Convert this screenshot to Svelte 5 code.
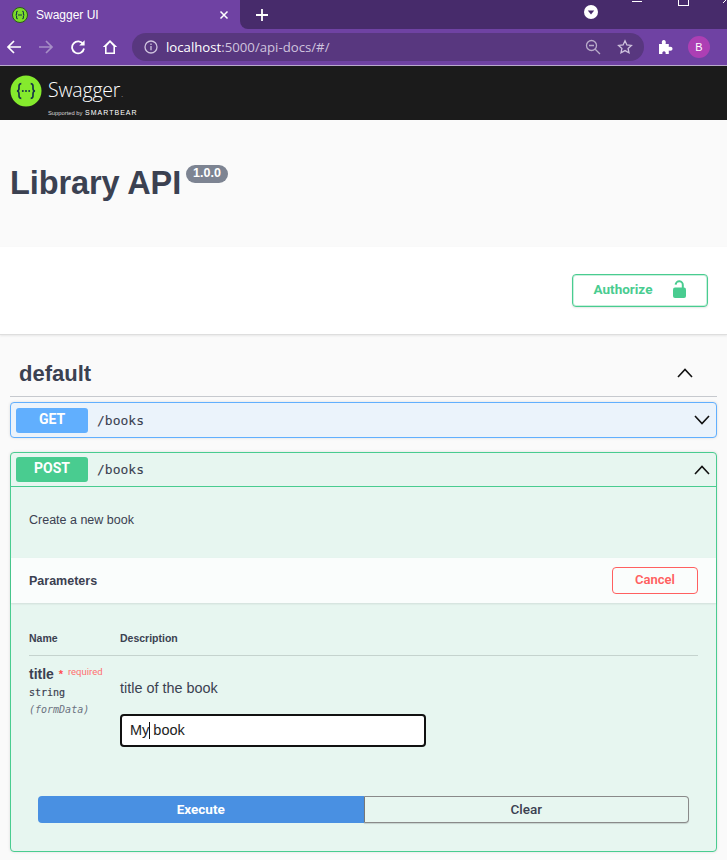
<script>
  let title = 'My book';
</script>

<div class="page">
  <div class="tabstrip">
    <div class="tab">
      <svg class="favicon" viewBox="0 0 16 16" width="16" height="16">
        <circle cx="8" cy="8" r="7.5" fill="#7ddc2a" stroke="#2b5a1a" stroke-width="1" />
        <path d="M5.8 4.200c-1.600 0-1.200 1.600-1.200 2.600 0 .7-.5 1.200-1 1.200.5 0 1 .5 1 1.200 0 1-.4 2.600 1.200 2.600M10.200 4.200c1.600 0 1.200 1.600 1.200 2.600 0 .7.5 1.200 1 1.200-.5 0-1 .5-1 1.200 0 1 .4 2.600-1.200 2.600M6 8h4" fill="none" stroke="#173647" stroke-width="1.100" />
      </svg>
      <span class="tab-title">Swagger UI</span>
      <svg class="tab-close" viewBox="0 0 10 10" width="10" height="10">
        <path d="M1.500 1.500l7 7M8.500 1.500l-7 7" stroke="#fff" stroke-width="1.500" />
      </svg>
    </div>
    <div class="strip-rest">
      <svg class="newtab" viewBox="0 0 14 14" width="14" height="14">
        <path d="M7 1v12M1 7h12" stroke="#fff" stroke-width="1.800" />
      </svg>
      <div class="strip-right">
        <span class="tabsearch">
          <svg viewBox="0 0 14 14" width="14" height="14">
            <circle cx="7" cy="7" r="7" fill="#fff" />
            <path d="M3.800 5.600h6.400L7 9.600z" fill="#46296a" />
          </svg>
        </span>
        <div class="winbtns">
          <span class="win-min"></span>
          <span class="win-max"></span>
          <svg class="win-close" viewBox="0 0 8 8" width="8" height="8">
            <path d="M0 3L5 -2M8 3L3 -2" stroke="#fff" stroke-width="1" />
          </svg>
        </div>
      </div>
    </div>
  </div>

  <div class="toolbar">
    <svg class="nav" viewBox="0 0 16 16" width="16" height="16">
      <path d="M15 8H2M8 2L2 8l6 6" fill="none" stroke="#fff" stroke-width="1.700" />
    </svg>
    <svg class="nav" viewBox="0 0 16 16" width="16" height="16">
      <path d="M1 8h13M8 2l6 6-6 6" fill="none" stroke="#a78fc6" stroke-width="1.700" />
    </svg>
    <svg class="nav" viewBox="0 0 16 16" width="16" height="16">
      <path d="M13.200 5.200A6 6 0 1 0 14 9.500" fill="none" stroke="#fff" stroke-width="1.800" />
      <path d="M14.600 1.200v5.400H9.200z" fill="#fff" />
    </svg>
    <svg class="nav" viewBox="0 0 16 16" width="16" height="16">
      <path d="M8 1L.8 8H3v7h10V8h2.200zM4.600 13.500V7.200L8 3.400l3.400 3.800v6.300z" fill="#fff" fill-rule="evenodd" />
    </svg>
    <div class="omnibox">
      <svg viewBox="0 0 14 14" width="14" height="14">
        <circle cx="7" cy="7" r="6" fill="none" stroke="#cfc3de" stroke-width="1.300" />
        <path d="M7 6v4.200M7 3.600v1.300" stroke="#cfc3de" stroke-width="1.300" />
      </svg>
      <span class="url"><b>localhost</b>:5000/api-docs/#/</span>
      <svg class="zoom-out" viewBox="0 0 16 16" width="16" height="16">
        <circle cx="6.500" cy="6.500" r="5" fill="none" stroke="#b9acca" stroke-width="1.300" />
        <path d="M10.200 10.200L15 15M4 6.500h5" stroke="#b9acca" stroke-width="1.300" />
      </svg>
      <svg class="star" viewBox="0 0 16 16" width="16" height="16">
        <path d="M8 1.800l1.900 4.100 4.500.5-3.300 3 .9 4.400L8 11.600l-4 2.200.9-4.400-3.300-3 4.500-.5z" fill="none" stroke="#cfc3de" stroke-width="1.300" />
      </svg>
    </div>
    <svg class="puzzle" viewBox="0 0 16 16" width="16" height="16">
      <path d="M1 5h3c-.7-2.800.3-4 1.800-4s2.500 1.200 1.800 4h3.200v3c2.700-.6 3.700.4 3.700 1.800s-1 2.500-3.700 1.800V15H7.600c.4-2-.5-2.800-1.600-2.800s-2 .8-1.600 2.800H1z" fill="#fff" />
    </svg>
    <span class="avatar">B</span>
  </div>
  <div class="toolbar-line"></div>

  <header class="topbar">
    <svg class="logo" viewBox="0 0 32 32" width="32" height="32">
      <circle cx="16" cy="16" r="15.500" fill="#85ea2d" />
      <path d="M11.300 8.700c-2.700 0-2.300 2.400-2.300 4.500 0 1.600-.9 2.700-2 2.800 1.100.1 2 1.200 2 2.800 0 2.100-.4 4.500 2.300 4.500M20.700 8.700c2.700 0 2.300 2.400 2.300 4.500 0 1.600.9 2.700 2 2.800-1.100.1-2 1.200-2 2.800 0 2.100.4 4.500-2.300 4.500" fill="none" stroke="#173647" stroke-width="1.700" />
      <circle cx="12.800" cy="16" r="1" fill="#173647" />
      <circle cx="16" cy="16" r="1" fill="#173647" />
      <circle cx="19.200" cy="16" r="1" fill="#173647" />
    </svg>
    <div class="brand">
      <span class="brand-name">Swagger<i>.</i></span>
      <span class="brand-sub">Supported by <b>SMARTBEAR</b></span>
    </div>
  </header>

  <section class="info">
    <h1>Library API</h1>
    <span class="version">1.0.0</span>
  </section>

  <section class="schemes">
    <button class="authorize">
      <span>Authorize</span>
      <svg viewBox="0 0 20 20" width="20" height="20">
        <path d="M13.800 9V6.200a3.600 3.600 0 0 0-7.200-.6" fill="none" stroke="#49cc90" stroke-width="2" />
        <rect x="4" y="8.500" width="13" height="10.500" rx="2" fill="#49cc90" />
      </svg>
    </button>
  </section>

  <main class="content">
    <div class="tag">
      <h3>default</h3>
      <svg class="chevron" viewBox="0 0 20 20" width="20" height="20">
        <path d="M3 14l7-7.500 7 7.500" fill="none" stroke="#111" stroke-width="1.600" />
      </svg>
    </div>

    <div class="opblock get">
      <div class="summary">
        <span class="method">GET</span>
        <span class="path">/books</span>
        <svg class="chevron" viewBox="0 0 20 20" width="20" height="20">
          <path d="M3 6l7 7.500 7-7.500" fill="none" stroke="#111" stroke-width="1.600" />
        </svg>
      </div>
    </div>

    <div class="opblock post">
      <div class="summary open">
        <span class="method">POST</span>
        <span class="path">/books</span>
        <svg class="chevron" viewBox="0 0 20 20" width="20" height="20">
          <path d="M3 14l7-7.500 7 7.500" fill="none" stroke="#111" stroke-width="1.600" />
        </svg>
      </div>
      <p class="description">Create a new book</p>
      <div class="section-head">
        <h4>Parameters</h4>
        <button class="cancel">Cancel</button>
      </div>
      <div class="params">
        <div class="param-head">
          <span class="col-name">Name</span>
          <span>Description</span>
        </div>
        <div class="param-row">
          <div class="col-name">
            <div class="param-name">title <em>*</em> <small>required</small></div>
            <div class="param-type">string</div>
            <div class="param-in">(formData)</div>
          </div>
          <div class="param-desc">
            <p>title of the book</p>
            <div class="input-wrap">
              <input bind:value={title} />
              <span class="caret"></span>
            </div>
          </div>
        </div>
      </div>
      <div class="actions">
        <button class="execute">Execute</button>
        <button class="clear">Clear</button>
      </div>
    </div>
  </main>
</div>

<style>
  :global(body) {
    margin: 0;
    background: #fafafa;
  }

  .page {
    width: 727px;
    height: 860px;
    overflow: hidden;
    font-family: "Liberation Sans", Arial, sans-serif;
    color: #3b4151;
  }

  .tabstrip {
    display: flex;
    height: 29px;
    background: #6f42a3;
  }

  .tab {
    width: 240px;
    display: flex;
    align-items: center;
    padding: 0 12px;
    box-sizing: border-box;
    gap: 8px;
  }

  .favicon {
    flex: none;
  }

  .tab-title {
    flex: 1;
    color: #fff;
    font-size: 12px;
  }

  .tab-close {
    margin-right: -1px;
  }

  .strip-rest {
    flex: 1;
    display: flex;
    align-items: center;
    background: #472b6b;
    border-bottom-left-radius: 8px;
    padding-left: 15px;
  }

  .strip-right {
    margin-left: auto;
    display: flex;
    align-items: flex-start;
    height: 100%;
  }

  .tabsearch {
    display: block;
    margin-top: 5px;
    margin-right: 34px;
    height: 14px;
  }

  .winbtns {
    display: flex;
    align-items: flex-start;
    gap: 36px;
    margin-right: 0;
  }

  .win-min {
    display: block;
    width: 10px;
    height: 1px;
    background: #fff;
    margin-top: 1px;
  }

  .win-max {
    display: block;
    width: 9px;
    height: 5px;
    border: 1px solid #fff;
    border-top: none;
    margin-left: 0;
  }

  .win-close {
    display: block;
    margin-right: -4px;
    margin-left: -2px;
  }

  .toolbar {
    display: flex;
    align-items: center;
    height: 36px;
    background: #6f42a3;
    padding-left: 6px;
    box-sizing: border-box;
  }

  .nav {
    flex: none;
    margin-right: 16px;
  }

  .omnibox {
    display: flex;
    align-items: center;
    width: 512px;
    height: 28px;
    margin-left: -2px;
    border-radius: 14px;
    background: #58377f;
    padding: 0 10px 0 12px;
    box-sizing: border-box;
  }

  .url {
    flex: 1;
    margin-left: 8px;
    font-size: 13.200px;
    font-family: "Open Sans", sans-serif;
    color: #cfc3de;
  }

  .url b {
    font-weight: 400;
    color: #fff;
  }

  .zoom-out {
    margin-right: 16px;
  }

  .star {
    margin-right: 1px;
  }

  .puzzle {
    margin-left: 14px;
  }

  .avatar {
    width: 22px;
    height: 22px;
    margin-left: 14px;
    border-radius: 50%;
    background: #ad3fb4;
    color: #fff;
    font-size: 11px;
    display: flex;
    align-items: center;
    justify-content: center;
  }

  .toolbar-line {
    height: 1px;
    background: #b9a9cc;
  }

  .topbar {
    height: 54px;
    background: #1b1b1b;
    display: flex;
    align-items: flex-start;
    padding-left: 10px;
    gap: 6px;
  }

  .logo {
    flex: none;
    margin-top: 9px;
  }

  .brand {
    display: flex;
    flex-direction: column;
    color: #fff;
    margin-top: 13px;
  }

  .brand-name {
    font-family: "Open Sans", sans-serif;
    font-size: 19.500px;
    font-weight: 300;
    line-height: 22px;
    letter-spacing: -0.200px;
  }

  .brand-name i {
    font-size: 7px;
    font-style: normal;
    margin-left: 1px;
  }

  .brand-sub {
    font-size: 5.800px;
    line-height: 9px;
    margin-top: 2px;
    color: #d8d8d8;
    white-space: nowrap;
  }

  .brand-sub b {
    font-size: 7px;
    letter-spacing: 1px;
    margin-left: 1px;
    color: #fff;
    font-weight: 400;
  }

  .info {
    height: 127px;
    box-sizing: border-box;
    background: #fafafa;
    display: flex;
    align-items: flex-start;
    padding: 44px 0 0 10px;
    gap: 5px;
  }

  h1 {
    margin: 0;
    font-size: 32.500px;
    line-height: 38px;
    font-weight: 700;
    color: #3b4151;
    letter-spacing: -0.100px;
  }

  .version {
    margin-top: 1px;
    height: 18px;
    padding: 0 7px;
    border-radius: 9px;
    background: #7d8492;
    color: #fff;
    font-size: 12.500px;
    font-weight: 700;
    line-height: 17px;
  }

  .schemes {
    height: 88px;
    box-sizing: border-box;
    background: #fff;
    border-bottom: 1px solid #dedede;
    box-shadow: 0 1px 2px rgba(0, 0, 0, 0.08);
    display: flex;
    justify-content: flex-end;
    align-items: flex-start;
    padding: 27px 19px 0 0;
  }

  button {
    font-family: "Liberation Sans", Arial, sans-serif;
    cursor: pointer;
  }

  .authorize {
    width: 136px;
    height: 33px;
    box-sizing: border-box;
    display: flex;
    align-items: center;
    justify-content: center;
    gap: 17px;
    padding: 0 0 3px 3px;
    background: #fff;
    border: 1px solid #49cc90;
    border-radius: 4px;
    color: #49cc90;
    font-family: Roboto, sans-serif;
    font-size: 13.500px;
    font-weight: 700;
    box-shadow: inset 0 0 0 1px rgba(73, 204, 144, 0.3), 0 1px 2px rgba(0, 0, 0, 0.1);
  }

  .content {
    padding: 0 10px;
  }

  .tag {
    height: 62px;
    box-sizing: border-box;
    margin-bottom: 5px;
    padding: 15px 22px 0 9px;
    border-bottom: 1px solid #c6c9ce;
    display: flex;
    align-items: center;
    justify-content: space-between;
  }

  h3 {
    margin: 2px 0 0;
    font-size: 22px;
    font-weight: 700;
    color: #3b4151;
  }

  .opblock {
    border-radius: 4px;
    border: 1px solid;
    box-shadow: 0 0 3px rgba(0, 0, 0, 0.12);
  }

  .get {
    height: 36px;
    box-sizing: border-box;
    margin-bottom: 14px;
    background: #ebf3fb;
    border-color: #61affe;
  }

  .post {
    height: 400px;
    box-sizing: border-box;
    background: #e7f6f0;
    border-color: #49cc90;
  }

  .summary {
    display: flex;
    align-items: center;
    height: 34px;
    padding: 0 4px 0 5px;
    box-sizing: border-box;
  }

  .summary.open {
    height: 34px;
    border-bottom: 1px solid #49cc90;
  }

  .method {
    width: 72px;
    height: 25px;
    border-radius: 3px;
    color: #fff;
    font-family: Roboto, sans-serif;
    font-size: 14px;
    font-weight: 700;
    line-height: 23px;
    text-align: center;
  }

  .get .method {
    background: #61affe;
  }

  .post .method {
    background: #49cc90;
  }

  .path {
    flex: 1;
    padding-left: 9px;
    font-family: "DejaVu Sans Mono", monospace;
    font-size: 13px;
    color: #3b4151;
    -webkit-text-stroke: 0.100px #3b4151;
  }

  .description {
    margin: 0;
    height: 71px;
    box-sizing: border-box;
    padding: 25px 18px 0;
    font-size: 12.500px;
    line-height: 16px;
    color: #3b4151;
  }

  .section-head {
    height: 45px;
    box-sizing: border-box;
    background: rgba(255, 255, 255, 0.8);
    box-shadow: 0 1px 2px rgba(0, 0, 0, 0.1);
    display: flex;
    align-items: center;
    justify-content: space-between;
    padding: 0 18px;
  }

  h4 {
    margin: 0;
    font-size: 12.500px;
    font-weight: 700;
    color: #3b4151;
  }

  .cancel {
    width: 86px;
    height: 27px;
    background: transparent;
    border: 1px solid #ff6060;
    border-radius: 4px;
    color: #ff6060;
    font-family: Roboto, sans-serif;
    font-size: 13px;
    font-weight: 600;
    padding: 0 0 2px;
  }

  .params {
    padding: 28px 18px 0;
  }

  .param-head {
    display: flex;
    height: 24px;
    border-bottom: 1px solid #c5d3ce;
    font-size: 10.500px;
    font-weight: 700;
    line-height: 14px;
    align-items: flex-start;
  }

  .col-name {
    width: 91px;
    flex: none;
  }

  .param-row {
    display: flex;
    padding-top: 8px;
  }

  .param-name {
    font-size: 14px;
    font-weight: 700;
    line-height: 16px;
    white-space: nowrap;
    color: #3b4151;
  }

  .param-name em {
    color: #ff4f4f;
    font-style: normal;
    font-size: 11px;
    vertical-align: 1px;
    margin-left: 1px;
  }

  .param-name small {
    color: #ff6f6f;
    font-family: Roboto, sans-serif;
    font-size: 9.500px;
    font-weight: 400;
    vertical-align: 4px;
    margin-left: 1px;
  }

  .param-type {
    font-family: "DejaVu Sans Mono", monospace;
    font-size: 10px;
    line-height: 14px;
    margin-top: 4px;
    -webkit-text-stroke: 0.200px #3b4151;
  }

  .param-in {
    font-family: "DejaVu Sans Mono", monospace;
    font-size: 10px;
    font-style: italic;
    line-height: 14px;
    margin-top: 3px;
    color: #6b7280;
  }

  .param-desc p {
    margin: 15px 0 0;
    font-size: 14.400px;
    line-height: 18px;
    color: #3b4151;
  }

  .input-wrap {
    position: relative;
    margin-top: 17px;
    width: 306px;
  }

  input {
    display: block;
    width: 100%;
    height: 33px;
    box-sizing: border-box;
    padding: 0 8px 1px;
    background: #fff;
    border: 2px solid #111;
    border-radius: 4px;
    outline: none;
    font-family: "Liberation Sans", Arial, sans-serif;
    font-size: 14.500px;
    color: #222;
  }

  .caret {
    position: absolute;
    left: 29px;
    top: 8px;
    width: 1px;
    height: 17px;
    background: #111;
  }

  .actions {
    display: flex;
    margin: 49px 27px 0;
  }

  .actions button {
    width: 50%;
    height: 27px;
    font-family: Roboto, sans-serif;
    font-size: 13.500px;
    font-weight: 700;
    padding: 0 0 2px;
  }

  .execute {
    background: #4990e2;
    border: none;
    border-radius: 4px 0 0 4px;
    color: #fff;
  }

  .actions .clear {
    background: transparent;
    border: 1px solid #8a8a8a;
    border-left-color: #777;
    border-radius: 0 4px 4px 0;
    color: #3b4151;
    font-weight: 500;
    box-shadow: 0 1px 1px rgba(0, 0, 0, 0.15);
  }
</style>
